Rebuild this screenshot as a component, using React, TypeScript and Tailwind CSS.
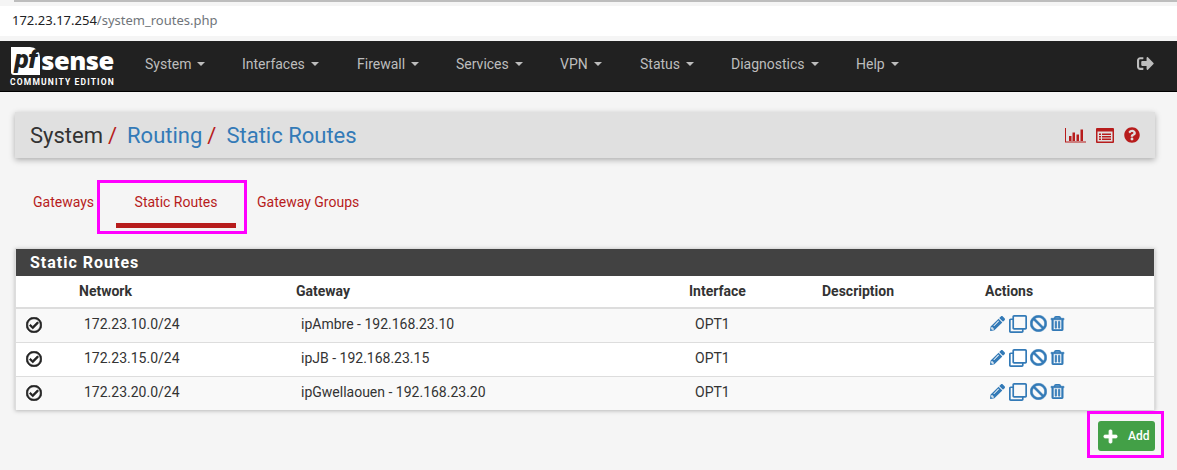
import { FaBan, FaPencilAlt, FaPlus, FaQuestionCircle, FaRegCheckCircle, FaRegClone, FaRegTrashAlt, FaSignOutAlt } from 'react-icons/fa';

const navItems = [
  { label: 'System', width: 'w-[97px]' },
  { label: 'Interfaces', width: 'w-[115px]' },
  { label: 'Firewall', width: 'w-[99px]' },
  { label: 'Services', width: 'w-[104px]' },
  { label: 'VPN', width: 'w-[80px]' },
  { label: 'Status', width: 'w-[91px]' },
  { label: 'Diagnostics', width: 'w-[125px]' },
  { label: 'Help', width: 'w-[80px]' },
];

const routes = [
  { network: '172.23.10.0/24', gateway: 'ipAmbre - 192.168.23.10', odd: true },
  { network: '172.23.15.0/24', gateway: 'ipJB - 192.168.23.15', odd: false },
  { network: '172.23.20.0/24', gateway: 'ipGwellaouen - 192.168.23.20', odd: true },
];

function Caret() {
  return <span className="ml-[6px] inline-block align-middle border-x-4 border-t-4 border-x-transparent border-t-[#bdbdbd]" />;
}

function Logo() {
  return (
    <div className="flex w-[105px] flex-col items-center">
      <div className="flex h-[30px] items-center">
        <span className="flex h-[28px] w-[29px] items-center justify-center rounded-tr-[10px] rounded-bl-[3px] bg-white pb-[3px] text-[26px] leading-[25px] font-black tracking-[-0.5px] italic text-[#212121]">pf</span>
        <span className="ml-[1px] text-[25.5px] leading-none font-extrabold tracking-[-0.5px] text-white [font-family:'Open_Sans',sans-serif]">sense</span>
      </div>
      <span className="mt-[1px] text-[8.5px] leading-[10px] font-bold tracking-[1.15px] whitespace-nowrap text-white">COMMUNITY EDITION</span>
    </div>
  );
}

function ChartIcon() {
  return (
    <svg width="21" height="15" viewBox="0 0 21 15" fill="currentColor">
      <path d="M0 0h1v13.500h20.500v1H0z" />
      <path d="M4 8h2.500v5H4zM7.500 4.500H10V13H7.500zM11.500 6.500H14V13h-2.500zM15.500 1.500H18V13h-2.500z" />
    </svg>
  );
}

function ListIcon() {
  return (
    <svg width="18" height="15" viewBox="0 0 18 15" fill="currentColor">
      <path fillRule="evenodd" d="M1 0h16a1 1 0 0 1 1 1v13a1 1 0 0 1-1 1H1a1 1 0 0 1-1-1V1a1 1 0 0 1 1-1zM1.500 3.500v10h15v-10z" />
      <path d="M3 5.500h2v1.500H3zM6 5.500h9v1.500H6zM3 8h2v1.500H3zM6 8h9v1.500H6zM3 10.500h2V12H3zM6 10.500h9V12H6z" />
    </svg>
  );
}

function Actions() {
  return (
    <div className="-mt-[2px] flex items-center text-[#337ab7]">
      <FaPencilAlt className="ml-[5px] text-[15px]" />
      <FaRegClone className="ml-[4px] text-[18px]" />
      <FaBan className="ml-[3px] text-[17px] [stroke-width:16]" />
      <FaRegTrashAlt className="ml-[3px] text-[15px] [stroke-width:24]" />
    </div>
  );
}

export default function App() {
  return (
    <div className="relative h-[470px] w-[1177px] overflow-hidden bg-[#f5f5f5] text-[14px] text-[#212121] [font-family:Roboto,sans-serif]">
      {/* Browser address bar */}
      <div className="ml-[14px] h-[2px] bg-[#bdbdbd]" />
      <div className="mt-[4px] flex h-[30px] items-center bg-white pl-[12px] text-[13px] [font-family:'Noto_Sans',sans-serif]">
        <span className="text-[#202124]">172.23.17.254</span>
        <span className="text-[#70757a]">/system_routes.php</span>
      </div>

      {/* Navbar */}
      <nav className="mt-[5px] flex h-[51px] items-center border-b border-black bg-[#212121] pl-[10px]">
        <Logo />
        <div className="ml-[15px] flex items-center pb-[4px]">
          {navItems.map((item) => (
            <div key={item.label} className={`${item.width} flex items-center pl-[15px] text-[#bdbdbd]`}>
              {item.label}
              <Caret />
            </div>
          ))}
        </div>
        <FaSignOutAlt className="mr-[23px] mb-[5px] ml-auto text-[17px] text-[#bdbdbd]" />
      </nav>

      <div className="ml-[15px] w-[1140px]">
        {/* Breadcrumb */}
        <div className="mt-[20px] flex h-[46px] items-center justify-between bg-[#e0e0e0] px-[15px] shadow-[0_2px_6px_rgba(0,0,0,0.3)]">
          <h1 className="pt-[1px] text-[22px] font-normal text-[#333]">
            System<span className="mx-[5px] text-[#b71c1c]">/</span>
            <span className="ml-[5px] text-[#337ab7]">Routing</span>
            <span className="mx-[5px] text-[#b71c1c]">/</span>
            <span className="ml-[5px] text-[#337ab7]">Static Routes</span>
          </h1>
          <div className="flex items-center gap-[10px] text-[#b71c1c]">
            <ChartIcon />
            <ListIcon />
            <FaQuestionCircle className="text-[16px]" />
          </div>
        </div>

        {/* Tabs */}
        <div className="mt-[22px] flex h-[48px] text-[14px] text-[#b71c1c]">
          <div className="ml-[18px] w-[83px] pt-[12px]">Gateways</div>
          <div className="flex w-[120px] flex-col items-center border-b-[5px] border-[#b71c1c] pt-[12px]">Static Routes</div>
          <div className="ml-[21px] pt-[12px]">Gateway Groups</div>
        </div>

        {/* Panel */}
        <div className="mt-[20px] border border-b-0 border-[#dddddd] bg-white shadow-[0_1px_4px_rgba(0,0,0,0.25)]">
          <div className="flex h-[27px] items-center bg-[#424242] pl-[14px] text-[16px] font-bold tracking-[1px] text-white">Static Routes</div>
          <div className="grid h-[31px] grid-cols-[63px_217px_393px_133px_163px_1fr] items-center text-[14px] font-bold text-[#333]">
            <span />
            <span>Network</span>
            <span>Gateway</span>
            <span>Interface</span>
            <span>Description</span>
            <span>Actions</span>
          </div>
          <div className="border-t-2 border-[#dddddd]">
            {routes.map((route) => (
              <div
                key={route.network}
                className={`grid h-[34px] grid-cols-[63px_217px_393px_133px_163px_1fr] items-center border-b border-[#dddddd] pb-[2px] text-[14px] text-[#333] last:h-[33px] last:border-b-0 ${route.odd ? 'bg-[#f9f9f9]' : 'bg-white'}`}
              >
                <FaRegCheckCircle className="ml-[10px] text-[16px] text-[#212121] [stroke-width:24]" />
                <span className="pl-[5px]">{route.network}</span>
                <span className="pl-[5px]">{route.gateway}</span>
                <span className="pl-[6px]">OPT1</span>
                <span />
                <Actions />
              </div>
            ))}
          </div>
        </div>

        {/* Add button */}
        <div className="mt-[11px] flex justify-end">
          <button className="flex h-[30px] w-[57px] items-center rounded-[3px] bg-[#43a047] pl-[5px] text-[12px] font-medium text-white">
            <FaPlus className="text-[15px] [stroke-width:30]" />
            <span className="ml-[10px]">Add</span>
          </button>
        </div>
      </div>

      {/* Magenta annotations drawn over the screenshot */}
      <div className="absolute top-[180px] left-[97px] h-[54px] w-[150px] border-[3px] border-[#ff00ff]" />
      <div className="absolute top-[411px] left-[1087px] h-[47px] w-[77px] border-[3px] border-[#ff00ff]" />
    </div>
  );
}
